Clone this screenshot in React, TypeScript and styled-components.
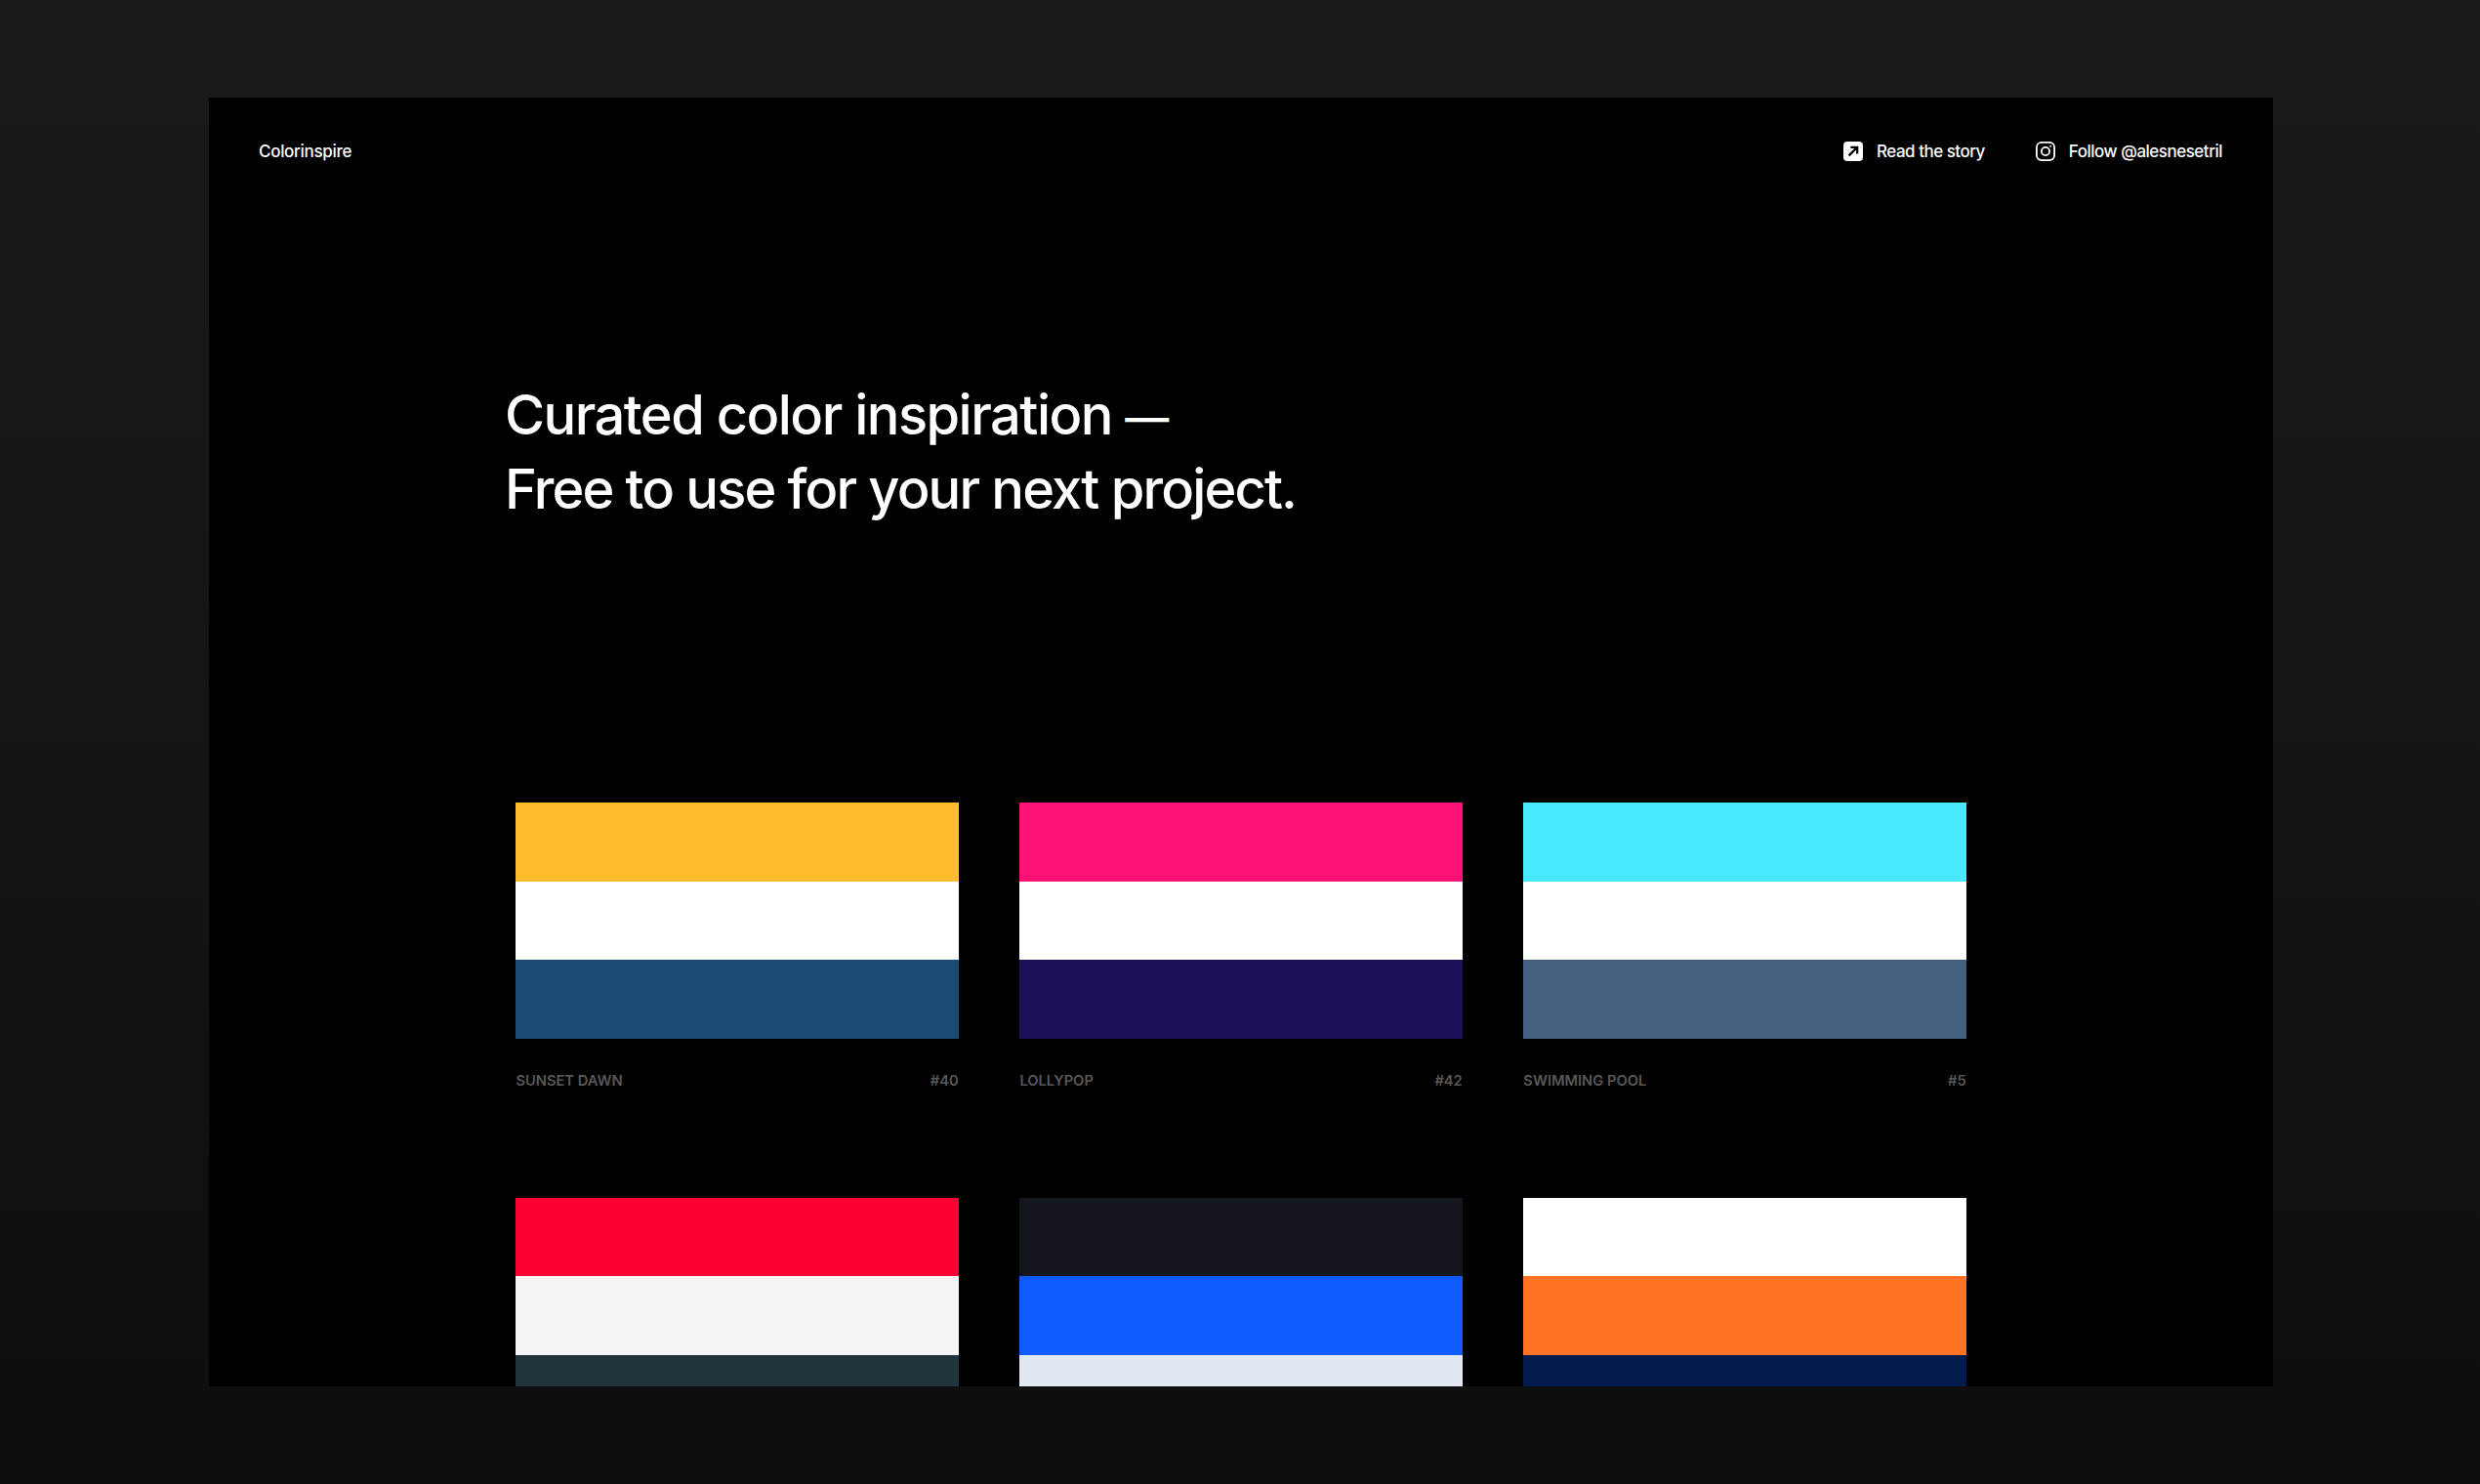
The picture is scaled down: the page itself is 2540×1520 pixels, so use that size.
import React from "react";
import styled, { createGlobalStyle } from "styled-components";

const Global = createGlobalStyle`
  html, body { margin: 0; padding: 0; background: #111; }
  * { box-sizing: border-box; }
`;

const Stage = styled.div`
  width: 2540px;
  height: 1520px;
  padding: 100px 212px 100px 214px;
  background: linear-gradient(180deg, #1a1a1a 0%, #0e0e0e 100%);
  overflow: hidden;
`;

const Window = styled.main`
  height: 1320px;
  background: #000;
  overflow: hidden;
  font-family: Inter, "Liberation Sans", sans-serif;
  color: #fff;
`;

const Nav = styled.header`
  display: flex;
  justify-content: space-between;
  align-items: center;
  padding: 42px 52px 0 51px;
  font-size: 17px;
  font-weight: 500;
  letter-spacing: -0.5px;
  line-height: 26px;
`;

const Brand = styled.span`
  letter-spacing: -0.3px;
`;

const Links = styled.nav`
  display: flex;
  gap: 52px;
`;

const Link = styled.a`
  display: flex;
  align-items: center;
  gap: 14px;
`;

const Hero = styled.h1`
  margin: 219px 0 0 303px;
  font-size: 56px;
  font-weight: 500;
  line-height: 76px;
`;

const HeroLine = styled.span<{ $tracking: number }>`
  display: block;
  letter-spacing: ${(p) => p.$tracking}px;
`;

const Dash = styled.span`
  font-size: 45px;
  line-height: 0;
  letter-spacing: 0;
  vertical-align: 1px;
`;

const Grid = styled.section`
  display: grid;
  grid-template-columns: repeat(3, 453.4px);
  column-gap: 62.6px;
  row-gap: 109.2px;
  margin: 283px 0 0 314.4px;
`;

const Swatch = styled.div`
  display: flex;
  flex-direction: column;
`;

const Band = styled.div<{ $color: string }>`
  height: 80.5px;
  background: ${(p) => p.$color};
`;

const Meta = styled.div`
  display: flex;
  justify-content: space-between;
  margin-top: 33px;
  height: 21px;
  font-size: 14.7px;
  line-height: 20px;
  font-weight: 600;
  color: #585858;
`;

const palettes = [
  { name: "SUNSET DAWN", id: "#40", colors: ["#ffbc2b", "#ffffff", "#1a4a76"] },
  { name: "LOLLYPOP", id: "#42", colors: ["#ff1278", "#ffffff", "#1a1259"] },
  { name: "SWIMMING POOL", id: "#5", colors: ["#48e9ff", "#ffffff", "#42607d"] },
  { name: "", id: "", colors: ["#ff0033", "#f4f4f4", "#1f343b"] },
  { name: "", id: "", colors: ["#14161d", "#0f5bff", "#e2e8f0"] },
  { name: "", id: "", colors: ["#ffffff", "#ff7424", "#021a4c"] },
];

const ArrowIcon = () => (
  <svg width="20" height="20" viewBox="0 0 20 20">
    <rect width="20" height="20" rx="4" fill="#fff" />
    <path d="M5.6 14.4 13.6 6.4M7.4 5.8h6.8v6.8" fill="none" stroke="#000" strokeWidth="2.2" />
  </svg>
);

const InstagramIcon = () => (
  <svg width="20" height="20" viewBox="0 0 20 20" fill="none" stroke="#fff" strokeWidth="1.8">
    <rect x="0.9" y="0.9" width="18.2" height="18.2" rx="5" />
    <circle cx="10" cy="10" r="4.1" />
    <circle cx="15.2" cy="4.8" r="0.7" fill="#fff" strokeWidth="0.6" />
  </svg>
);

export default function App() {
  return (
    <>
      <Global />
      <Stage>
        <Window>
          <Nav>
            <Brand>Colorinspire</Brand>
            <Links>
              <Link><ArrowIcon />Read the story</Link>
              <Link><InstagramIcon />Follow @alesnesetril</Link>
            </Links>
          </Nav>
          <Hero>
            <HeroLine $tracking={-1.53}>Curated color inspiration <Dash>—</Dash></HeroLine>
            <HeroLine $tracking={-1.85}>Free to use for your next project.</HeroLine>
          </Hero>
          <Grid>
            {palettes.map((p, i) => (
              <Swatch key={i}>
                {p.colors.map((c) => <Band key={c} $color={c} />)}
                <Meta><span>{p.name}</span><span>{p.id}</span></Meta>
              </Swatch>
            ))}
          </Grid>
        </Window>
      </Stage>
    </>
  );
}
